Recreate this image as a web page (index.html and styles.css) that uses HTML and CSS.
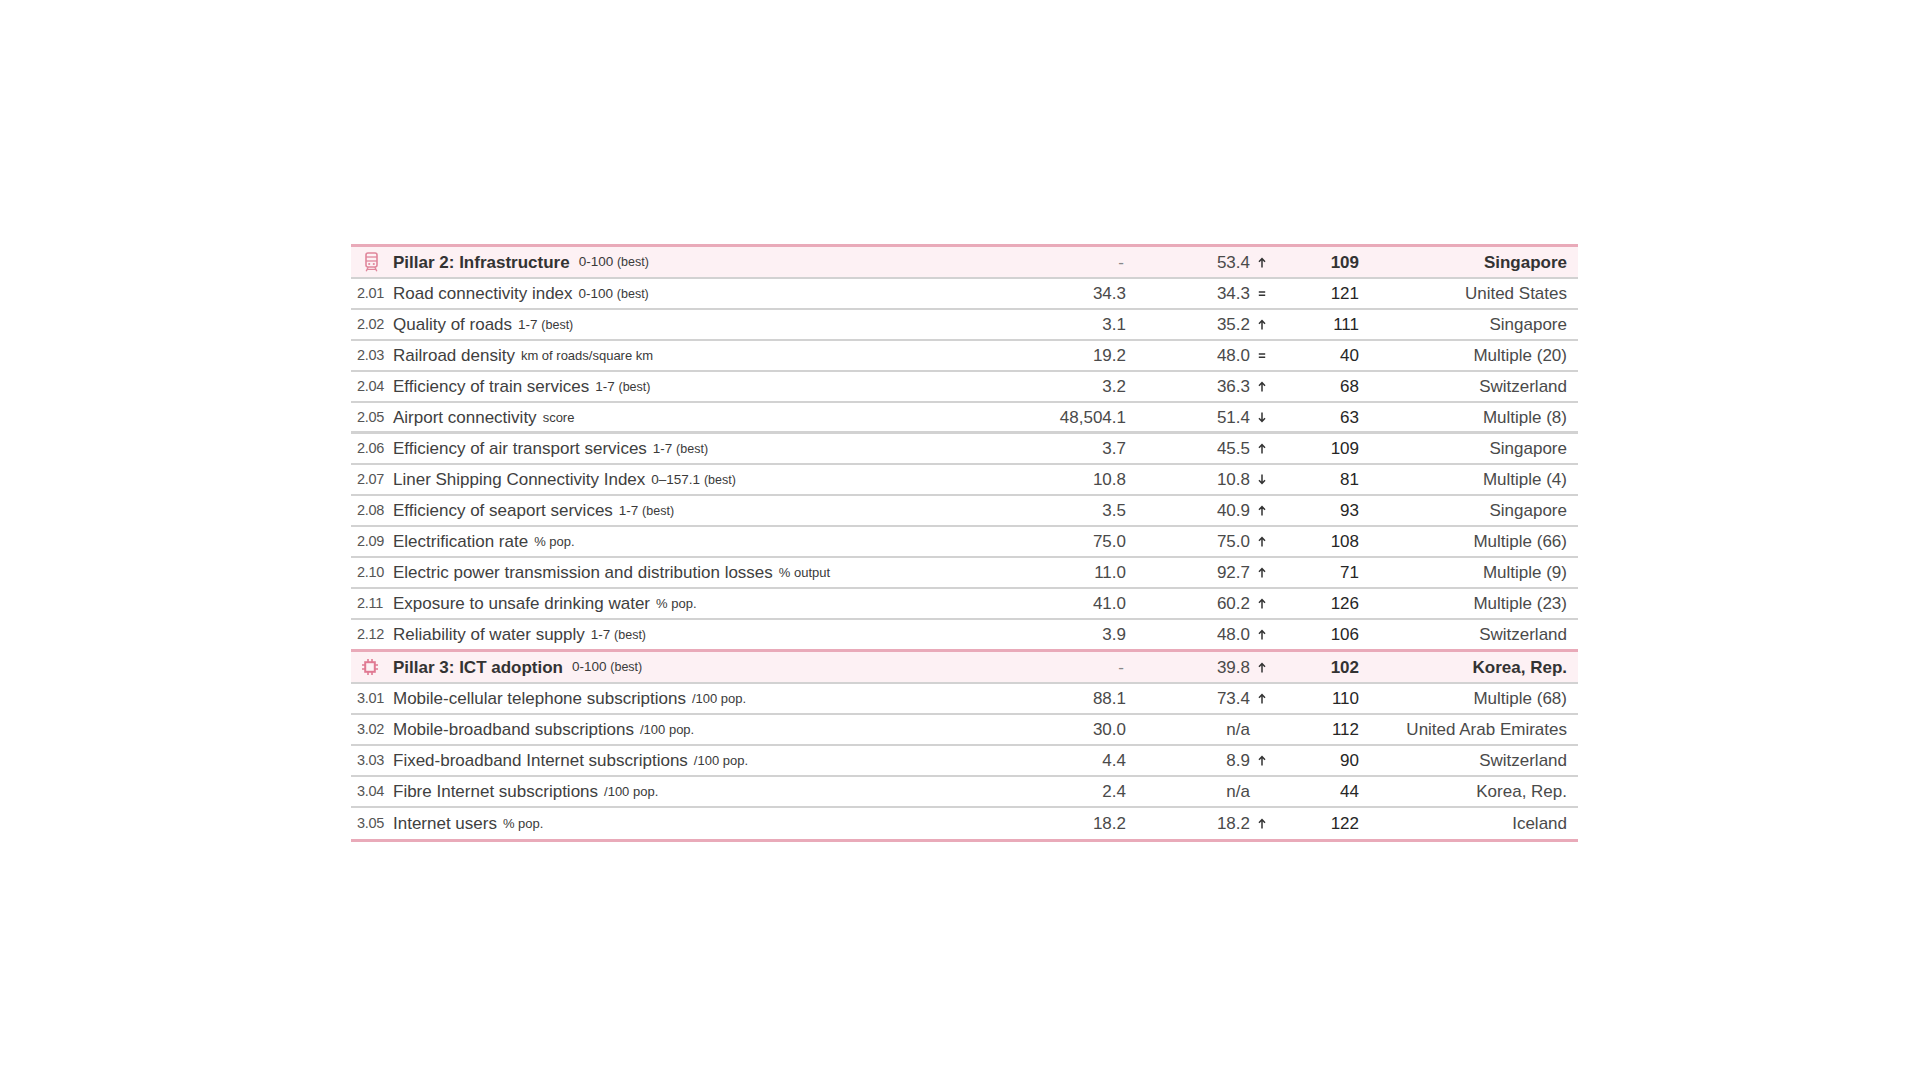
FILE: index.html
```html
<!DOCTYPE html>
<html lang="en">
<head>
<meta charset="utf-8">
<title>Pillars</title>
<link rel="stylesheet" href="styles.css">
</head>
<body>
<div class="page">
  <div class="table">
    <div class="row pillar">
      <div class="label"><span class="prefix"><svg class="icon-train" width="13" height="20" viewBox="0 0 13 20"><rect x="1" y="1" width="11" height="14" rx="2" fill="none" stroke="#e0869b" stroke-width="1.6"/><line x1="1" y1="5" x2="12" y2="5" stroke="#e0869b" stroke-width="1.3"/><line x1="1" y1="9" x2="12" y2="9" stroke="#e0869b" stroke-width="1.3"/><circle cx="4.2" cy="12" r="1.1" fill="#e0869b"/><circle cx="8.8" cy="12" r="1.1" fill="#e0869b"/><line x1="3.2" y1="15" x2="1.2" y2="19.2" stroke="#e0869b" stroke-width="1.4"/><line x1="9.8" y1="15" x2="11.8" y2="19.2" stroke="#e0869b" stroke-width="1.4"/><line x1="2" y1="17.4" x2="11" y2="17.4" stroke="#e0869b" stroke-width="1.2"/></svg></span><span class="name">Pillar 2: Infrastructure</span><span class="unit">0-100 <small>(best)</small></span></div>
      <div class="v1 dash">-</div>
      <div class="v2">53.4</div><div class="trend"><svg class="arr" width="8" height="11" viewBox="0 0 8 11"><path d="M4 10.5V1.8M1 4.8L4 1.5L7 4.8" fill="none" stroke="#333" stroke-width="1.5"/></svg></div>
      <div class="rank">109</div>
      <div class="country">Singapore</div>
    </div>

    <div class="row"><div class="label"><span class="prefix">2.01</span><span class="name">Road connectivity index</span><span class="unit">0-100 <small>(best)</small></span></div><div class="v1">34.3</div><div class="v2">34.3</div><div class="trend"><svg class="arr" width="8" height="11" viewBox="0 0 8 11"><path d="M0.8 4H7.2M0.8 7.2H7.2" fill="none" stroke="#333" stroke-width="1.4"/></svg></div><div class="rank">121</div><div class="country">United States</div></div>

    <div class="row"><div class="label"><span class="prefix">2.02</span><span class="name">Quality of roads</span><span class="unit">1-7 <small>(best)</small></span></div><div class="v1">3.1</div><div class="v2">35.2</div><div class="trend"><svg class="arr" width="8" height="11" viewBox="0 0 8 11"><path d="M4 10.5V1.8M1 4.8L4 1.5L7 4.8" fill="none" stroke="#333" stroke-width="1.5"/></svg></div><div class="rank">111</div><div class="country">Singapore</div></div>

    <div class="row"><div class="label"><span class="prefix">2.03</span><span class="name">Railroad density</span><span class="unit sm">km of roads/square km</span></div><div class="v1">19.2</div><div class="v2">48.0</div><div class="trend"><svg class="arr" width="8" height="11" viewBox="0 0 8 11"><path d="M0.8 4H7.2M0.8 7.2H7.2" fill="none" stroke="#333" stroke-width="1.4"/></svg></div><div class="rank">40</div><div class="country">Multiple (20)</div></div>

    <div class="row"><div class="label"><span class="prefix">2.04</span><span class="name">Efficiency of train services</span><span class="unit">1-7 <small>(best)</small></span></div><div class="v1">3.2</div><div class="v2">36.3</div><div class="trend"><svg class="arr" width="8" height="11" viewBox="0 0 8 11"><path d="M4 10.5V1.8M1 4.8L4 1.5L7 4.8" fill="none" stroke="#333" stroke-width="1.5"/></svg></div><div class="rank">68</div><div class="country">Switzerland</div></div>

    <div class="row thick"><div class="label"><span class="prefix">2.05</span><span class="name">Airport connectivity</span><span class="unit sm">score</span></div><div class="v1">48,504.1</div><div class="v2">51.4</div><div class="trend"><svg class="arr" width="8" height="11" viewBox="0 0 8 11"><path d="M4 0.5V9.2M1 6.2L4 9.5L7 6.2" fill="none" stroke="#333" stroke-width="1.5"/></svg></div><div class="rank">63</div><div class="country">Multiple (8)</div></div>

    <div class="row"><div class="label"><span class="prefix">2.06</span><span class="name">Efficiency of air transport services</span><span class="unit">1-7 <small>(best)</small></span></div><div class="v1">3.7</div><div class="v2">45.5</div><div class="trend"><svg class="arr" width="8" height="11" viewBox="0 0 8 11"><path d="M4 10.5V1.8M1 4.8L4 1.5L7 4.8" fill="none" stroke="#333" stroke-width="1.5"/></svg></div><div class="rank">109</div><div class="country">Singapore</div></div>

    <div class="row"><div class="label"><span class="prefix">2.07</span><span class="name">Liner Shipping Connectivity Index</span><span class="unit">0–157.1 <small>(best)</small></span></div><div class="v1">10.8</div><div class="v2">10.8</div><div class="trend"><svg class="arr" width="8" height="11" viewBox="0 0 8 11"><path d="M4 0.5V9.2M1 6.2L4 9.5L7 6.2" fill="none" stroke="#333" stroke-width="1.5"/></svg></div><div class="rank">81</div><div class="country">Multiple (4)</div></div>

    <div class="row"><div class="label"><span class="prefix">2.08</span><span class="name">Efficiency of seaport services</span><span class="unit">1-7 <small>(best)</small></span></div><div class="v1">3.5</div><div class="v2">40.9</div><div class="trend"><svg class="arr" width="8" height="11" viewBox="0 0 8 11"><path d="M4 10.5V1.8M1 4.8L4 1.5L7 4.8" fill="none" stroke="#333" stroke-width="1.5"/></svg></div><div class="rank">93</div><div class="country">Singapore</div></div>

    <div class="row"><div class="label"><span class="prefix">2.09</span><span class="name">Electrification rate</span><span class="unit sm">% pop.</span></div><div class="v1">75.0</div><div class="v2">75.0</div><div class="trend"><svg class="arr" width="8" height="11" viewBox="0 0 8 11"><path d="M4 10.5V1.8M1 4.8L4 1.5L7 4.8" fill="none" stroke="#333" stroke-width="1.5"/></svg></div><div class="rank">108</div><div class="country">Multiple (66)</div></div>

    <div class="row"><div class="label"><span class="prefix">2.10</span><span class="name">Electric power transmission and distribution losses</span><span class="unit sm">% output</span></div><div class="v1">11.0</div><div class="v2">92.7</div><div class="trend"><svg class="arr" width="8" height="11" viewBox="0 0 8 11"><path d="M4 10.5V1.8M1 4.8L4 1.5L7 4.8" fill="none" stroke="#333" stroke-width="1.5"/></svg></div><div class="rank">71</div><div class="country">Multiple (9)</div></div>

    <div class="row"><div class="label"><span class="prefix">2.11</span><span class="name">Exposure to unsafe drinking water</span><span class="unit sm">% pop.</span></div><div class="v1">41.0</div><div class="v2">60.2</div><div class="trend"><svg class="arr" width="8" height="11" viewBox="0 0 8 11"><path d="M4 10.5V1.8M1 4.8L4 1.5L7 4.8" fill="none" stroke="#333" stroke-width="1.5"/></svg></div><div class="rank">126</div><div class="country">Multiple (23)</div></div>

    <div class="row last"><div class="label"><span class="prefix">2.12</span><span class="name">Reliability of water supply</span><span class="unit">1-7 <small>(best)</small></span></div><div class="v1">3.9</div><div class="v2">48.0</div><div class="trend"><svg class="arr" width="8" height="11" viewBox="0 0 8 11"><path d="M4 10.5V1.8M1 4.8L4 1.5L7 4.8" fill="none" stroke="#333" stroke-width="1.5"/></svg></div><div class="rank">106</div><div class="country">Switzerland</div></div>

    <div class="row pillar">
      <div class="label"><span class="prefix"><svg class="icon-chip" width="18" height="18" viewBox="0 0 18 18"><rect x="4.2" y="4.2" width="9.6" height="9.6" fill="none" stroke="#e07a93" stroke-width="2"/><path d="M7 1v3.2M11 1v3.2M7 13.8V17M11 13.8V17M1 7h3.2M1 11h3.2M13.8 7H17M13.8 11H17" fill="none" stroke="#e07a93" stroke-width="1.6"/></svg></span><span class="name">Pillar 3: ICT adoption</span><span class="unit">0-100 <small>(best)</small></span></div>
      <div class="v1 dash">-</div>
      <div class="v2">39.8</div><div class="trend"><svg class="arr" width="8" height="11" viewBox="0 0 8 11"><path d="M4 10.5V1.8M1 4.8L4 1.5L7 4.8" fill="none" stroke="#333" stroke-width="1.5"/></svg></div>
      <div class="rank">102</div>
      <div class="country">Korea, Rep.</div>
    </div>

    <div class="row"><div class="label"><span class="prefix">3.01</span><span class="name">Mobile-cellular telephone subscriptions</span><span class="unit sm">/100 pop.</span></div><div class="v1">88.1</div><div class="v2">73.4</div><div class="trend"><svg class="arr" width="8" height="11" viewBox="0 0 8 11"><path d="M4 10.5V1.8M1 4.8L4 1.5L7 4.8" fill="none" stroke="#333" stroke-width="1.5"/></svg></div><div class="rank">110</div><div class="country">Multiple (68)</div></div>

    <div class="row"><div class="label"><span class="prefix">3.02</span><span class="name">Mobile-broadband subscriptions</span><span class="unit sm">/100 pop.</span></div><div class="v1">30.0</div><div class="v2">n/a</div><div class="trend"></div><div class="rank">112</div><div class="country">United Arab Emirates</div></div>

    <div class="row"><div class="label"><span class="prefix">3.03</span><span class="name">Fixed-broadband Internet subscriptions</span><span class="unit sm">/100 pop.</span></div><div class="v1">4.4</div><div class="v2">8.9</div><div class="trend"><svg class="arr" width="8" height="11" viewBox="0 0 8 11"><path d="M4 10.5V1.8M1 4.8L4 1.5L7 4.8" fill="none" stroke="#333" stroke-width="1.5"/></svg></div><div class="rank">90</div><div class="country">Switzerland</div></div>

    <div class="row"><div class="label"><span class="prefix">3.04</span><span class="name">Fibre Internet subscriptions</span><span class="unit sm">/100 pop.</span></div><div class="v1">2.4</div><div class="v2">n/a</div><div class="trend"></div><div class="rank">44</div><div class="country">Korea, Rep.</div></div>

    <div class="row last end"><div class="label"><span class="prefix">3.05</span><span class="name">Internet users</span><span class="unit sm">% pop.</span></div><div class="v1">18.2</div><div class="v2">18.2</div><div class="trend"><svg class="arr" width="8" height="11" viewBox="0 0 8 11"><path d="M4 10.5V1.8M1 4.8L4 1.5L7 4.8" fill="none" stroke="#333" stroke-width="1.5"/></svg></div><div class="rank">122</div><div class="country">Iceland</div></div>
  </div>
</div>
</body>
</html>
```

FILE: styles.css
```css
html, body {
  margin: 0;
  padding: 0;
  background: #ffffff;
}

body {
  font-family: "Liberation Sans", Arial, Helvetica, sans-serif;
  color: #444;
  width: 1918px;
  height: 1080px;
}

.page {
  padding-top: 244px;
  padding-left: 351px;
}

.table {
  width: 1227px;
  border-bottom: 3px solid #e9aab9;
}

.row {
  display: grid;
  grid-template-columns: 1fr 226px 124px 21px 88px 208px;
  align-items: center;
  height: 29px;
  padding: 0 11px 0 6px;
  border-bottom: 2px solid #d2d2d2;
  font-size: 17px;
  line-height: 1;
}

.row.thick {
  border-bottom-width: 3px;
  height: 28px;
}

.row.last {
  border-bottom: none;
}

.row.end {
  height: 31px;
}

.row.pillar {
  height: 30px;
  background: #fdf1f4;
  border-top: 3px solid #e9aab9;
}

.label {
  display: flex;
  align-items: center;
  white-space: nowrap;
}

.prefix {
  width: 36px;
  flex: 0 0 36px;
  font-size: 14.5px;
  color: #555;
  letter-spacing: -0.3px;
}

.pillar .prefix {
  display: flex;
  align-items: center;
}

.icon-train {
  display: block;
  margin-left: 8px;
}

.icon-chip {
  display: block;
  margin-left: 4px;
}

.name {
  color: #404040;
}

.pillar .name {
  font-weight: bold;
  color: #333;
}

.unit {
  margin-left: 6px;
  font-size: 13.5px;
  color: #3a3a3a;
}

.pillar .unit {
  margin-left: 9px;
}

.unit small {
  font-size: 12.5px;
}

.unit.sm {
  font-size: 13px;
}

.v1,
.v2,
.rank,
.country {
  text-align: right;
}

.v1,
.v2 {
  color: #4a4a4a;
}

.dash {
  color: #888;
  padding-right: 2px;
}

.trend {
  display: flex;
  align-items: center;
  padding-left: 8px;
}

.arr {
  display: block;
}

.rank {
  color: #262626;
}

.pillar .rank,
.pillar .country {
  font-weight: bold;
  color: #333;
}

.country {
  color: #4a4a4a;
}
```
